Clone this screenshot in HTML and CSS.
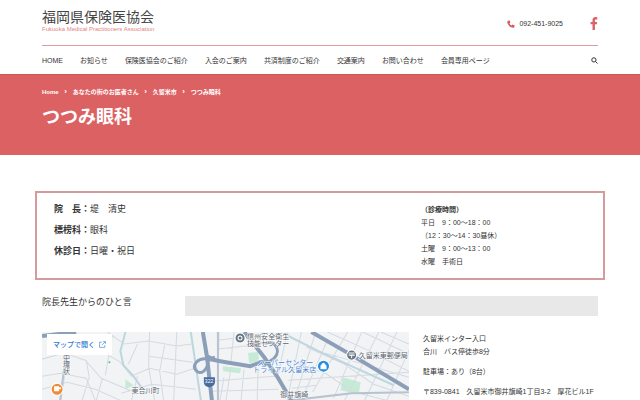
FILE: index.html
```html
<!DOCTYPE html>
<html lang="ja">
<head>
<meta charset="utf-8">
<meta name="viewport" content="width=device-width, initial-scale=1">
<title>つつみ眼科 | 福岡県保険医協会</title>
<link rel="stylesheet" href="styles.css">
</head>
<body>
<header class="container header">
  <div class="brand-row">
    <a class="brand" href="#">
      <span class="brand-name">福岡県保険医協会</span>
      <span class="brand-sub">Fukuoka Medical Practitioners Association</span>
    </a>
    <div class="contact">
      <a class="phone" href="tel:092-451-9025">
        <svg class="phone-icon" viewBox="0 0 16 16" aria-hidden="true"><path d="M1 2.6 4.2.8c.5-.2.9 0 1.100.4l1.300 3.200c.2.4.1.8-.3 1.100L4.900 6.800c.9 1.900 2.400 3.400 4.300 4.300l1.300-1.500c.3-.4.7-.5 1.100-.3l3.200 1.400c.5.2.6.6.5 1.100l-1 3.100c-.1.4-.5.7-1 .7C6.600 15.600.4 9.400.4 3.600c0-.5.2-.8.6-1z"/></svg>
        <span>092-451-9025</span>
      </a>
      <a class="facebook" href="#" aria-label="Facebook">
        <svg viewBox="0 0 8 14" aria-hidden="true"><path d="M7.500.2v2.400H6.200c-1 0-1.200.5-1.200 1.200v1.500h2.400L7.100 7.800H5V14H2.400V7.800H.3V5.300h2.100V3.400C2.400 1.300 3.700.1 5.700.1c.8 0 1.500 0 1.800.1z"/></svg>
      </a>
    </div>
  </div>
  <nav class="nav">
    <ul class="menu">
      <li><a href="#">HOME</a></li>
      <li><a href="#">お知らせ</a></li>
      <li><a href="#">保険医協会のご紹介</a></li>
      <li><a href="#">入会のご案内</a></li>
      <li><a href="#">共済制度のご紹介</a></li>
      <li><a href="#">交通案内</a></li>
      <li><a href="#">お問い合わせ</a></li>
      <li><a href="#">会員専用ページ</a></li>
    </ul>
    <button class="search" type="button" aria-label="検索">
      <svg viewBox="0 0 14 14" aria-hidden="true"><circle cx="5.800" cy="5.800" r="4.300"/><path d="m9 9 4 4"/></svg>
    </button>
  </nav>
</header>

<section class="hero">
  <div class="container">
    <ol class="crumbs">
      <li><a href="#">Home</a></li>
      <li><a href="#">あなたの街のお医者さん</a></li>
      <li><a href="#">久留米市</a></li>
      <li>つつみ眼科</li>
    </ol>
    <h1>つつみ眼科</h1>
  </div>
</section>

<main class="main">
  <section class="info">
    <div class="profile">
      <p><strong>院　長：</strong>堤　清史</p>
      <p><strong>標榜科：</strong>眼科</p>
      <p><strong>休診日：</strong>日曜・祝日</p>
    </div>
    <div class="hours">
      <p><strong>（診療時間）</strong></p>
      <p>平日　9：00〜18：00</p>
      <p>（12：30〜14：30昼休）</p>
      <p>土曜　9：00〜13：00</p>
      <p>水曜　手術日</p>
    </div>
  </section>

  <section class="container message">
    <h2>院長先生からのひと言</h2>
    <div class="message-body"></div>
  </section>

  <section class="container access">
    <div class="map">
      <svg class="map-art" viewBox="0 0 365 68" preserveAspectRatio="xMinYMin slice" role="img" aria-label="周辺地図">
        <rect width="365" height="68" fill="#f1f3f5"/>
        <g fill="#c5ead6">
          <path d="m205 21 10-1 1 9-10 2zM180 34l18 2-1 5-17-2zM299 45l18 5-2 12-18-4zM83 47l8 6-8 4z"/>
        </g>
        <g fill="none" stroke="#d5dae1" stroke-width="1">
          <path d="M0 27l22-6 21 7 16 18 28 12M0 44l18-3 26 5 9 22M25 25l-6 43M44 28l3 17-7 23M64 22l14 8 11 14 18-8 27 6 18-6M65 0l17 12 24-3 28 5 15-2M95 12l-9 20M107 0l-1 35 6 33M122 13l-5 26 4 29M134 0l-3 68M106 24l44 6M79 61l30-9 44 5M0 57l25-7 28 7 25 11M60 46l-6 22M95 44l-6 24M70 3l-7 40"/>
          <path d="M176 0l-1 68M176 8l26-3M191 0l-3 29M175 17l37-4M166 49l66-5M169 59l66-2M188 35l-5 33M201 37l-3 31M215 36l-1 32M181 45l-4 23M244 0l-9 42M258 0l-14 68M271 4l-20 64M284 8l-26 60M304 0l-35 60M318 0l-28 66M335 0l-34 68M353 0l-32 68M365 18l-22 50M251 30l31 11 26 18 35 9M263 15l36 16 31 21 35 12M284 0l40 18 41 21M319 0l46 22M337 0l28 12M245 48l120-8M249 56l24-3M282 21l83 24"/>
        </g>
        <g fill="none" stroke="#b9c3cf" stroke-width="2">
          <path d="M24 21l-6 47M175 0v68M248 68l60-7 57-1"/>
        </g>
        <g fill="none" stroke="#bdd7df" stroke-width="2">
          <path d="M83 0l-5 19 3 14 10 11 12 17M148 0l4 27 6 41M243 3l32 16 35 16 40 18"/>
        </g>
        <g fill="none" stroke="#8c9fb9" stroke-width="4">
          <path d="M0 4 34 0M160 0l4 24 5 44M166 27l17 3 24 4 14-5M201 0l20 25 14 21 14 24M268 0l40 23 57 34"/>
          <path stroke-width="3" d="M165 27c-10-2-16 6-12 11 4 6 13 0 12-11l7-2M165 24l10 5M221 12c9-6 18 6 10 14l-10 7"/>
        </g>
        <path d="M161 45h11v5q0 4-6 5-5-1-5-5z" fill="#496a9f"/>
        <text x="162" y="51" class="route">322</text>
        <circle cx="15" cy="57" r="6" fill="#ef8c35" stroke="#fff"/>
        <path d="M12 54h5v5h-5zM17 55h2v2h-2z" fill="#fff"/>
        <circle cx="197" cy="6" r="5" fill="#657584" stroke="#fff"/>
        <circle cx="197" cy="6" r="2" fill="none" stroke="#fff"/>
        <circle cx="280" cy="34" r="6" fill="#258ee0" stroke="#fff"/>
        <path d="M277 33h6v4h-6zM278 33v-1q2-3 4 0v1" fill="#fff"/>
        <circle cx="308" cy="23" r="5" fill="#657584" stroke="#fff"/>
        <path d="M305 21h6M305 23h6M308 23v3" stroke="#fff" fill="none"/>
        <circle cx="67" cy="30" r="1" fill="#55b9a4"/>
        <g class="place">
          <text x="89" y="61">東合川町</text>
          <text x="204" y="7">信州安全衛生</text>
          <text x="204" y="14">技能センター</text>
          <text x="315" y="26">久留米東郵便局</text>
          <text x="237" y="65">御井旗崎</text>
          <text x="24" y="22" class="upright">中環状</text>
        </g>
        <g class="shop">
          <text x="214" y="33">スーパーセンター</text>
          <text x="210" y="40">トライアル久留米店</text>
        </g>
      </svg>
      <a class="map-open" href="#">マップで開く
        <svg viewBox="0 0 12 12" aria-hidden="true"><path d="M5 2H1v9h9V7M7 1h4v4M11 1 5 7"/></svg>
      </a>
    </div>
    <address class="directions">
      <p>久留米インター入口<br>合川　バス停徒歩8分</p>
      <p>駐車場：あり（8台）</p>
      <p>〒839-0841　久留米市御井旗崎1丁目3-2　厚花ビル1F</p>
    </address>
  </section>
</main>
</body>
</html>
```
FILE: styles.css
```css
* {
  box-sizing: border-box;
  margin: 0;
  padding: 0;
}

body {
  display: flex;
  flex-direction: column;
  min-height: 100vh;
  background: #fff;
  color: #333;
  font: 7px/13px "Liberation Sans", "Noto Sans CJK JP", sans-serif;
}

a {
  color: inherit;
  text-decoration: none;
}

ul,
ol {
  list-style: none;
}

.container {
  width: 100%;
  padding: 0 42px;
}

.brand-row {
  display: flex;
  justify-content: space-between;
  align-items: center;
  height: 46px;
  padding-top: 2px;
  border-bottom: 1px solid #e59a9c;
}

.brand {
  display: flex;
  flex-direction: column;
  margin-top: -6px;
}

.brand-name {
  font-size: 14px;
  line-height: 17px;
  color: #444;
}

.brand-sub {
  font-size: 6px;
  line-height: 7px;
  color: #e58384;
}

.contact,
.phone {
  display: flex;
  align-items: center;
}

.contact {
  gap: 27px;
}

.phone {
  gap: 4px;
}

.phone-icon {
  width: 8px;
  height: 8px;
  fill: #d95b5d;
}

.facebook svg {
  display: block;
  width: 8px;
  height: 13px;
  fill: #dc6264;
}

.nav {
  display: flex;
  justify-content: space-between;
  align-items: center;
  height: 28px;
}

.menu {
  display: flex;
  gap: 17px;
}

.search {
  display: flex;
  border: 0;
  background: none;
}

.search svg {
  width: 7px;
  height: 7px;
  fill: none;
  stroke: #333;
  stroke-width: 2;
}

.hero {
  height: 81px;
  padding-top: 11px;
  border-top: 1px solid #cb5558;
  background: #dc6163;
  color: #fff;
}

.crumbs {
  display: flex;
  font-size: 6px;
  line-height: 12px;
  font-weight: bold;
}

.crumbs li + li::before {
  content: "›";
  display: inline-block;
  width: 14px;
  font-size: 8px;
  text-align: center;
}

h1 {
  margin-top: 6px;
  font-size: 18px;
  line-height: 26px;
}

.main {
  display: flex;
  flex: 1;
  flex-direction: column;
}

.info {
  display: flex;
  margin: 36px 35px 0;
  padding: 10px 17px;
  border: 2px solid #d59a9c;
}

.profile {
  flex: 0 0 69%;
  font-size: 9px;
  line-height: 13px;
}

.profile p + p {
  margin-top: 8px;
}

.hours {
  flex: 1;
}

.message {
  display: flex;
  margin-top: 16px;
}

h2 {
  flex: 1;
  font-size: 9px;
  line-height: 13px;
  font-weight: normal;
}

.message-body {
  flex: 0 0 413px;
  flex-basis: calc(75% - 4px);
  height: 20px;
  background: #e8e8e8;
}

.access {
  display: flex;
  flex: 1;
  gap: 14px;
  margin-top: 16px;
}

.map {
  position: relative;
  flex: 0 0 66%;
  display: flex;
}

.map-art {
  width: 100%;
  height: 100%;
}

.map-open {
  position: absolute;
  top: 2px;
  left: 5px;
  display: flex;
  align-items: center;
  gap: 4px;
  padding: 4px 6px;
  background: #fff;
  color: #2878d4;
  font-weight: 500;
}

.map-open svg {
  width: 7px;
  height: 7px;
  fill: none;
  stroke: currentColor;
  stroke-width: 1;
}

.place text,
.shop text {
  font-size: 7px;
  fill: #59626c;
  stroke: #fff;
  stroke-width: 1;
  paint-order: stroke;
}

.shop text {
  fill: #3f7ed0;
}

.place .upright {
  writing-mode: vertical-rl;
}

.map .route {
  font-size: 5px;
  fill: #fff;
}

.directions {
  flex: 1;
  font-style: normal;
  white-space: nowrap;
}

.directions p + p {
  margin-top: 7px;
}
```
